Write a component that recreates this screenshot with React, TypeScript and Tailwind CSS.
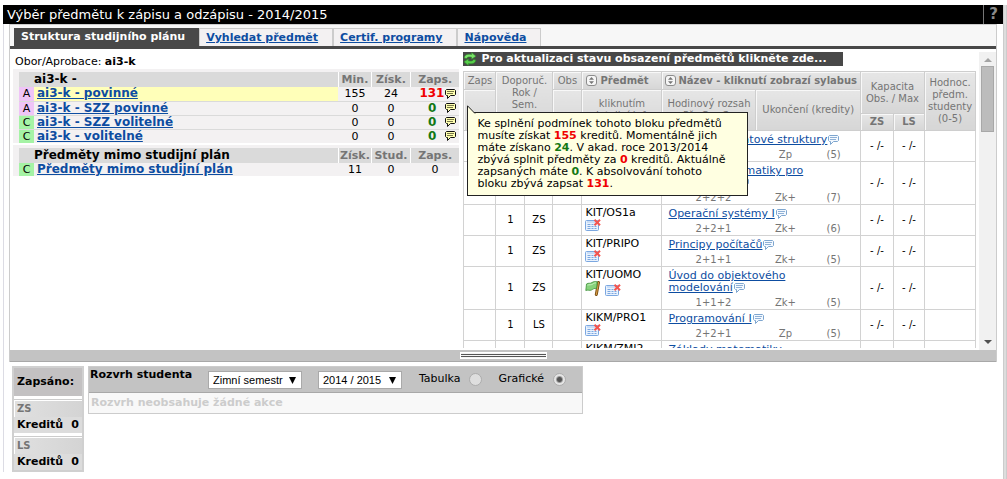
import { Fragment } from 'react'
import type { ReactNode } from 'react'

interface BlockRow {
  type: 'A' | 'C'
  name: string
  min: number
  earned: number
  enrolled: number
  active?: boolean
}

interface Subject {
  semester: string
  code: string
  name: ReactNode
  hours: string
  exam: string
  credits: number
  flag?: boolean
}

const tabs = ['Vyhledat předmět', 'Certif. programy', 'Nápověda']

const blocks: BlockRow[] = [
  { type: 'A', name: 'ai3-k - povinné', min: 155, earned: 24, enrolled: 131, active: true },
  { type: 'A', name: 'ai3-k - SZZ povinné', min: 0, earned: 0, enrolled: 0 },
  { type: 'C', name: 'ai3-k - SZZ volitelné', min: 0, earned: 0, enrolled: 0 },
  { type: 'C', name: 'ai3-k - volitelné', min: 0, earned: 0, enrolled: 0 },
]

const subjects: Subject[] = [
  { semester: 'ZS', code: 'KIT/ALGDS', name: 'Algoritmy a datové struktury', hours: '2+2+1', exam: 'Zp', credits: 5 },
  { semester: 'ZS', code: 'KIKM/ZMI1', name: <>Základy matematiky pro<br />informatiky I</>, hours: '2+2+2', exam: 'Zk+', credits: 7 },
  { semester: 'ZS', code: 'KIT/OS1a', name: 'Operační systémy I', hours: '2+2+1', exam: 'Zk+', credits: 6 },
  { semester: 'ZS', code: 'KIT/PRIPO', name: 'Principy počítačů', hours: '2+1+1', exam: 'Zk+', credits: 5 },
  { semester: 'ZS', code: 'KIT/UOMO', name: <>Úvod do objektového<br />modelování</>, hours: '1+1+2', exam: 'Zk+', credits: 5, flag: true },
  { semester: 'LS', code: 'KIKM/PRO1', name: 'Programování I', hours: '2+2+1', exam: 'Zp', credits: 5 },
  { semester: 'LS', code: 'KIKM/ZMI2', name: <>Základy matematiky<br />pro informatiky II</>, hours: '2+2+2', exam: 'Zk+', credits: 7 },
]

function Bubble({ dark = false }: { dark?: boolean }) {
  return (
    <svg width="11" height="10" viewBox="0 0 11 10" className={`inline-block shrink-0 ${dark ? '' : 'ml-px align-[-2px]'}`} aria-hidden="true">
      <path d="M1.500.5h8l1 1v4l-1 1h-4l-3 3v-3h-1l-1-1v-4z" fill={dark ? '#ffffb0' : '#f4f9ff'} stroke={dark ? '#111111' : '#7ea6cf'} />
      <path d="M2 2.500h7M2 4.500h6" stroke={dark ? '#77774a' : '#8fb1d6'} />
    </svg>
  )
}

function Refresh() {
  return (
    <svg width="14" height="14" viewBox="0 0 14 14" className="shrink-0" aria-hidden="true">
      <path d="M1.200 6C1.500 3 4 1.600 8.600 2.500V.5L13 4.200 8.600 7.200V5.200C5.500 4.500 4.200 5.200 3.500 6.500z" fill="#7be36a" stroke="#2f8f2a" strokeWidth=".6" />
      <path d="M12.800 8C12.500 11 10 12.400 5.400 11.500v2L1 9.800l4.400-3v2c3.100.7 4.400 0 5.100-1.300z" fill="#58cf4c" stroke="#2f8f2a" strokeWidth=".6" />
    </svg>
  )
}

function Sort() {
  return (
    <svg width="11" height="11" viewBox="0 0 11 11" className="inline-block shrink-0" aria-hidden="true">
      <rect x=".5" y=".5" width="10" height="10" rx="2.500" fill="#f6f6f6" stroke="#8c8c8c" />
      <path d="M5.500 2 8 4.800H3zM5.500 9 8 6.200H3z" fill="#777777" />
    </svg>
  )
}

function CalendarRemove() {
  return (
    <svg width="16" height="12" viewBox="0 0 16 12" className="inline-block" aria-hidden="true">
      <rect x=".5" y="1.500" width="13" height="10" rx="1" fill="#e9f2fd" stroke="#7ba7e0" />
      <path d="M2 3h9" stroke="#a9c8f0" />
      <path d="M2.500 5.500h3M2.500 7.500h3M2.500 9.500h3M6.500 5.500h2M6.500 7.500h2M6.500 9.500h2M9.500 7.500h2M9.500 9.500h2" stroke="#7ba7e0" />
      <path d="M9.500.8 15 6.300M15 .8 9.500 6.300" stroke="#f4554f" strokeWidth="2" />
    </svg>
  )
}

function Flag() {
  return (
    <svg width="16" height="15" viewBox="0 0 16 15" className="inline-block" aria-hidden="true">
      <path d="M13.500 1.500 11.300 13.500" stroke="#7a4f14" strokeWidth="3" strokeLinecap="round" />
      <path d="M13.500 1.500 11.300 13.500" stroke="#d59a45" strokeWidth="1.200" strokeLinecap="round" />
      <path d="M1.500 3C3.500 1.500 5 3 7 1.500 9 .3 10 .5 12.300.8L11.500 7.500C9 7 8.500 8 6.500 9 4.500 10 3 8.500.8 9.500z" fill="#86d27b" stroke="#3e8f3a" strokeWidth=".8" />
      <path d="M2.500 4.200c2-1 3.200.2 5-1C9 2 10 1.900 11 1.900" stroke="#c8f2bf" fill="none" />
    </svg>
  )
}

function SubHeader({ children }: { children?: ReactNode }) {
  return <th className="border-l border-white px-px text-center text-[11px] font-bold text-[#757575]">{children}</th>
}

const head = 'border border-[#cecece] bg-linear-to-b from-[#e6e6e6] to-[#d6d6d6] p-0 font-normal shadow-[inset_1px_1px_0_#f8f8f8]'
const cell = 'border border-[#d2d2d2] p-0'

function BlockColumns() {
  return (
    <colgroup>
      <col className="w-[15px]" />
      <col />
      <col className="w-[33px]" />
      <col className="w-[39px]" />
      <col className="w-[49px]" />
    </colgroup>
  )
}

function BlocksPanel() {
  return (
    <div className="pt-[6px] pr-1 pl-[3px]">
      <p className="pl-[2px] text-[11px] leading-[13px]">
        Obor/Aprobace: <b>ai3-k</b>
      </p>
      <div className="mt-px bg-[#f3f1f2] pt-[3px] pl-[6px]">
        <table className="w-full table-fixed border-collapse text-[11px] leading-[13px]">
          <BlockColumns />
          <thead>
            <tr className="h-[15px] bg-[#dadada] text-[12px]">
              <th />
              <th className="text-left">ai3-k -</th>
              <SubHeader>Min.</SubHeader>
              <SubHeader>Získ.</SubHeader>
              <SubHeader>Zaps.</SubHeader>
            </tr>
          </thead>
          <tbody>
            {blocks.map((block) => (
              <tr key={block.name} className="h-[14px] border-b border-[#dadada] last:border-b-0">
                <td className={`text-center ${block.type === 'A' ? 'bg-[#efc4f7]' : 'bg-[#a5f3a5]'}`}>{block.type}</td>
                <td className={`pl-[3px] text-[12px] ${block.active ? 'bg-[#ffffb9]' : ''}`}>
                  <a href="#" className="font-bold text-[#0d4da1] underline">{block.name}</a>
                </td>
                <td className="text-center">{block.min}</td>
                <td className="text-center">{block.earned}</td>
                <td>
                  <div className="flex items-center justify-end pr-[3px]">
                    <span className={`text-[12px] font-bold ${block.active ? 'pr-px text-[#f00000]' : 'pr-[9px] text-[#147814]'}`}>{block.enrolled}</span>
                    <Bubble dark />
                  </div>
                </td>
              </tr>
            ))}
          </tbody>
        </table>
      </div>
      <div className="mt-[2px] bg-[#f3f1f2] pt-[3px] pl-[6px]">
        <table className="w-full table-fixed border-collapse text-[11px] leading-[13px]">
          <BlockColumns />
          <thead>
            <tr className="h-[15px] bg-[#dadada] text-[12px]">
              <th />
              <th className="text-left">Předměty mimo studijní plán</th>
              <SubHeader>Získ.</SubHeader>
              <SubHeader>Stud.</SubHeader>
              <SubHeader>Zaps.</SubHeader>
            </tr>
          </thead>
          <tbody>
            <tr className="h-[13px]">
              <td className="bg-[#a5f3a5] text-center">C</td>
              <td className="pl-[3px] text-[12px]">
                <a href="#" className="font-bold text-[#0d4da1] underline">Předměty mimo studijní plán</a>
              </td>
              <td className="text-center">11</td>
              <td className="text-center">0</td>
              <td className="text-center">0</td>
            </tr>
          </tbody>
        </table>
      </div>
    </div>
  )
}

function SubjectsTable() {
  return (
    <table className="w-full table-fixed border-collapse text-[10px] leading-[12px]">
      <colgroup>
        <col className="w-[32px]" />
        <col className="w-[29px]" />
        <col className="w-[28px]" />
        <col className="w-[29px]" />
        <col className="w-[80px]" />
        <col className="w-[94px]" />
        <col />
        <col className="w-[33px]" />
        <col className="w-[31px]" />
        <col className="w-[51px]" />
      </colgroup>
      <thead className="text-[#757575]">
        <tr className="h-[18px]">
          <th className={head}>Zaps</th>
          <th className={`${head} pt-[3px] align-top`} colSpan={2} rowSpan={3}>Doporuč.<br />Rok /<br />Sem.</th>
          <th className={head}>Obs</th>
          <th className={`${head} whitespace-nowrap`}>
            <span className="flex items-center gap-[3px] pl-1 font-bold"><Sort />Předmět</span>
          </th>
          <th className={`${head} whitespace-nowrap`} colSpan={2}>
            <span className="flex items-center gap-[2px] pl-[3px] font-bold"><Sort />Název - kliknutí zobrazí sylabus</span>
          </th>
          <th className={head} colSpan={2} rowSpan={2}>Kapacita<br />Obs. / Max</th>
          <th className={head} rowSpan={3}>Hodnoc.<br />předm.<br />studenty<br />(0-5)</th>
        </tr>
        <tr className="h-[24px]">
          <th className={head} rowSpan={2} />
          <th className={head} rowSpan={2} />
          <th className={head} rowSpan={2}>kliknutím<br />detailní info</th>
          <th className={`${head} whitespace-nowrap`} rowSpan={2}>Hodinový rozsah<br />Př+Cv+Se</th>
          <th className={`${head} whitespace-nowrap`} rowSpan={2}>Ukončení (kredity)</th>
        </tr>
        <tr className="h-[17px]">
          <th className={head}><b>ZS</b></th>
          <th className={head}><b>LS</b></th>
        </tr>
      </thead>
      <tbody>
        {subjects.map((subject) => (
          <tr key={subject.code} className="h-[31px]">
            <td className={cell} />
            <td className={`${cell} text-center`}>1</td>
            <td className={`${cell} text-center`}>{subject.semester}</td>
            <td className={cell} />
            <td className={`${cell} pt-[2px] pl-[3px] align-top text-[11px]`}>
              {subject.code}
              <div className="flex items-end gap-1">
                {subject.flag && <Flag />}
                <CalendarRemove />
              </div>
            </td>
            <td className={`${cell} pt-[3px] align-top`} colSpan={2}>
              <div className="pl-[6px] text-[11px] whitespace-nowrap">
                <a href="#" className="text-[#0d4da1] underline">{subject.name}</a>
                <Bubble />
              </div>
              <div className="mt-[3px] grid grid-cols-[102px_42px_1fr] pr-5 text-center text-[#757575]">
                <span>{subject.hours}</span>
                <span>{subject.exam}</span>
                <span className="pl-5">({subject.credits})</span>
              </div>
            </td>
            <td className={`${cell} text-center`}>- /-</td>
            <td className={`${cell} text-center`}>- /-</td>
            <td className={cell} />
          </tr>
        ))}
      </tbody>
    </table>
  )
}

function BlockTooltip() {
  return (
    <div className="absolute top-[63px] left-1 border border-[#222222] bg-[#ffffe1] py-[5px] pr-[21px] pl-[9px] text-[11px] leading-[12px] whitespace-nowrap">
      <svg width="9" height="9" viewBox="0 0 9 9" className="absolute -top-[8px] -left-px" aria-hidden="true">
        <path d="M.5 9V.8L8 8.500V9z" fill="#ffffe1" />
        <path d="M.5 9V.8L8 8.500" fill="none" stroke="#222222" />
      </svg>
      Ke splnění podmínek tohoto bloku předmětů<br />
      musíte získat <b className="text-[#f00000]">155</b> kreditů. Momentálně jich<br />
      máte získano <b className="text-[#147814]">24</b>. V akad. roce 2013/2014<br />
      zbývá splnit předměty za <b className="text-[#f00000]">0</b> kreditů. Aktuálně<br />
      zapsaných máte <b className="text-[#147814]">0</b>. K absolvování tohoto<br />
      bloku zbývá zapsat <b className="text-[#f00000]">131</b>.
    </div>
  )
}

function Scrollbar() {
  return (
    <div className="mt-[3px] flex w-[17px] shrink-0 flex-col items-center bg-[#f1f1f1] py-[6px]">
      <svg width="8" height="4" viewBox="0 0 8 4" aria-hidden="true">
        <path d="M4 0 8 4H0z" fill="#a3a3a3" />
      </svg>
      <div className="mt-1 h-[66px] w-[13px] border border-[#a8a8a8] bg-[#bcbcbc]" />
      <svg width="8" height="4" viewBox="0 0 8 4" className="mt-auto" aria-hidden="true">
        <path d="M4 4 8 0H0z" fill="#505050" />
      </svg>
    </div>
  )
}

function Dropdown({ label, options, width }: { label: string; options: string[]; width: string }) {
  return (
    <span className={`relative block ${width}`}>
      <select aria-label={label} className="block h-[18px] w-full appearance-none border border-[#a9a9a9] bg-white pl-1 font-['Liberation_Sans',Arial,sans-serif] text-[11px] leading-[14px] text-black">
        {options.map((option) => (
          <option key={option}>{option}</option>
        ))}
      </select>
      <svg width="7" height="7" viewBox="0 0 7 7" className="pointer-events-none absolute top-[6px] right-[6px]" aria-hidden="true">
        <path d="M0 0h7L3.500 7z" fill="#000000" />
      </svg>
    </span>
  )
}

function ViewRadio({ label, checked }: { label: string; checked?: boolean }) {
  return (
    <label className="flex items-center gap-[9px] text-[11px]">
      {label}
      <input
        type="radio"
        name="view"
        defaultChecked={checked}
        className="size-[13px] appearance-none rounded-full border border-[#acacac] bg-[#dedede] checked:bg-[radial-gradient(circle,#555555_0_2px,#e4e4e4_4px)]"
      />
    </label>
  )
}

function CreditsBox() {
  return (
    <div className="w-[72px] shrink-0 border-2 border-[#d0d0d0] bg-[#dcdcdc] text-[11px] leading-[16px] font-bold">
      <div className="bg-[#c3c1c2] py-[6px] pl-[3px]">Zapsáno:</div>
      {['ZS', 'LS'].map((semester) => (
        <Fragment key={semester}>
          <div className="h-[5px] border-t-3 border-b border-white bg-[#cccccc]" />
          <div className="border-l border-white bg-linear-to-r from-[#e0e0e0] to-[#d4d4d4] pl-[2px] text-[10px] text-[#757575]">{semester}</div>
          <div className="flex justify-between px-[3px]">
            <span>Kreditů</span>
            <span>0</span>
          </div>
        </Fragment>
      ))}
    </div>
  )
}

export default function App() {
  return (
    <div className="flex min-h-screen bg-white pt-[5px] font-['DejaVu_Sans',Verdana,sans-serif] text-black">
      <div className="min-w-0 flex-1 pl-[3px]">
        <header className="flex h-[19px] items-center bg-black text-white">
          <h1 className="flex-1 pl-1 text-[13px]">Výběr předmětu k zápisu a odzápisu - 2014/2015</h1>
          <button className="h-full w-[20px] border-l border-[#757575] text-[15px] leading-[19px] font-bold text-[#8a8a8a]">?</button>
        </header>
        <div className="mr-[2px] border-l border-[#dcdce4] pr-1 pl-[5px]">
          <main className="border-x border-[#cccccc]">
            <nav className="flex items-end border-t border-b-3 border-t-[#cccccc] border-b-[#484848] bg-[#f7f7f7] pt-[3px] pl-1 text-[11px] leading-[18px] font-bold">
              <a href="#" className="bg-[#484848] pr-[14px] pl-[7px] text-white">Struktura studijního plánu</a>
              {tabs.map((tab) => (
                <span key={tab} className="border border-b-0 border-[#cccccc] bg-[#f3f1f2] pr-[14px] pl-[6px] leading-[17px]">
                  <a href="#" className="text-[#0d4da1] underline">{tab}</a>
                </span>
              ))}
            </nav>
            <div className="grid h-[301px] grid-cols-[453fr_532fr]">
              <BlocksPanel />
              <div className="flex min-h-0 min-w-0">
                <div className="relative min-w-0 flex-1 overflow-hidden pt-[3px] pr-[3px]">
                  <button className="flex h-[14px] items-center gap-1 bg-[#484848] pr-4 text-[11px] leading-[14px] font-bold whitespace-nowrap text-white">
                    <Refresh />
                    Pro aktualizaci stavu obsazení předmětů klikněte zde...
                  </button>
                  <div className="mt-[5px] h-[277px] overflow-hidden">
                    <SubjectsTable />
                  </div>
                  <BlockTooltip />
                </div>
                <Scrollbar />
              </div>
            </div>
            <div className="flex h-[12px] items-center justify-center border-b border-[#a8a8a8] bg-[#c3c3c3]">
              <div className="flex h-[7px] w-[87px] flex-col justify-between border border-white bg-[#f4f4f4] py-px">
                <div className="h-px bg-[#555555]" />
                <div className="h-px bg-[#555555]" />
              </div>
            </div>
          </main>
          <section className="mt-1 flex items-start gap-1 pl-[3px]">
            <CreditsBox />
            <div className="w-[495px] border border-[#cccccc] bg-[#f8f8f8]">
              <div className="flex h-[26px] items-center border-b border-[#a8a8a8] bg-[#c3c3c3] pr-4 text-[11px]">
                <h2 className="w-[119px] pb-2 pl-px font-bold">Rozvrh studenta</h2>
                <Dropdown label="Semestr" options={['Zimní semestr', 'Letní semestr']} width="w-[94px]" />
                <div className="w-4" />
                <Dropdown label="Akademický rok" options={['2014 / 2015', '2013 / 2014']} width="w-[84px]" />
                <div className="ml-auto flex gap-4">
                  <ViewRadio label="Tabulka" />
                  <ViewRadio label="Grafické" checked />
                </div>
              </div>
              <p className="pl-[2px] text-[11px] leading-[20px] font-bold text-[#cccccc]">Rozvrh neobsahuje žádné akce</p>
            </div>
          </section>
        </div>
      </div>
      <div className="w-1 border-x border-[#cccccc] bg-[#dddddd]" />
    </div>
  )
}
